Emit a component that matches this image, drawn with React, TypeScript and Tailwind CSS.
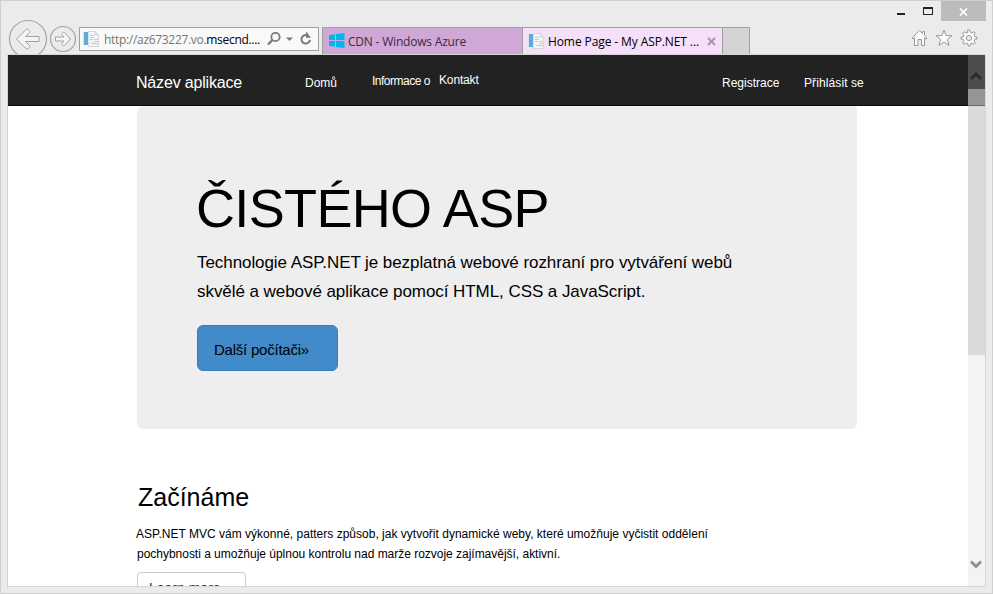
import type { ReactNode } from "react";

const chromeFont = "font-['Open_Sans','Noto_Sans',sans-serif]";

function PageIcon() {
  return (
    <svg width="16" height="16" viewBox="0 0 16 16" className="shrink-0">
      <path d="M5.500 .5h7l3 3v12h-10z" fill="#f3f5f7" stroke="#d3d7db" />
      <path d="M12 .5v3.500h3.500" fill="#e4e8ec" stroke="#d3d7db" />
      <path d="M7 4.500h4M7 6.500h4M7 8.500h3M11 8.500h4M11 10.500h4M8 12.500h7" stroke="#c2cad3" />
      <rect x="1" y="1" width="4" height="13" fill="#64a9d8" />
      <path d="M.5 .5v14M5.500 .5v14" stroke="#d5e5ef" />
    </svg>
  );
}

function BackIcon() {
  return (
    <svg width="40" height="40" viewBox="0 0 40 40" className="mt-[18px] shrink-0" fill="#f5f5f5" stroke="#a3a3a3">
      <circle cx="20" cy="20" r="18.500" fill="#ebebeb" strokeWidth="1.200" />
      <path d="M8.500 20 18 10.500q1-1 2.200 0l1.300 1.300q.8.9 0 1.800L17.500 17.500H31v5H17.500l4 4q.8.900 0 1.800l-1.300 1.300q-1.200 1-2.200 0z" />
    </svg>
  );
}

function ForwardIcon() {
  return (
    <svg width="28" height="28" viewBox="0 0 28 28" className="mt-6 shrink-0" fill="#f5f5f5" stroke="#a3a3a3">
      <circle cx="14" cy="14" r="12.500" fill="#ebebeb" strokeWidth="1.200" />
      <path d="m21.500 14-6 6.500q-.7.600-1.300 0l-1.200-1.200q-.5-.6 0-1.200l2-2.100H6.500v-4H15l-2-2.100q-.5-.6 0-1.200l1.200-1.200q.6-.6 1.300 0z" />
    </svg>
  );
}

function AddressBar() {
  return (
    <div className="mt-[26px] ml-0.5 flex h-6 w-60 shrink-0 items-center border border-[#a0a0a0] bg-[#f9f9f9] pl-[3px]">
      <PageIcon />
      <span className={`ml-[5px] w-[157px] pt-0.5 text-[12px] leading-[22px] tracking-[-0.310px] whitespace-nowrap text-[#777] ${chromeFont}`}>
        http://az673227.vo.<span className="text-black">msecnd....</span>
      </span>
      <svg width="52" height="16" viewBox="0 0 52 16" className="ml-[7px] shrink-0" fill="none" stroke="#7a7a7a">
        <circle cx="8.500" cy="6" r="4.200" strokeWidth="1.800" />
        <path d="M5.500 9 1 13.500" strokeWidth="2.400" />
        <path d="M19 6.500h7L22.500 10z" fill="#7a7a7a" stroke="none" />
        <path d="M40 4.200A4.300 4.300 0 1 0 43 8.800" strokeWidth="2" />
        <path d="M39 .2v6.600h5z" fill="#7a7a7a" stroke="none" />
      </svg>
    </div>
  );
}

function Tabs() {
  return (
    <div className={`mt-[26px] ml-[3px] flex h-[27px] shrink-0 border-t border-l border-[#a0a0a0] text-[12px] ${chromeFont}`}>
      <div className="flex w-[199px] bg-[#d0a8d7] pl-1.5 text-[#3d2b40]">
        <svg width="16" height="15" viewBox="0 0 16 15" className="mt-[5px] shrink-0" fill="#00b6f1">
          <path d="M0 2.200 6 1.300V7H0zM7 1.100 15.500 0v7H7zM0 8h6v5.700l-6-.9zM7 8h8.500v7L7 13.900z" />
        </svg>
        <span className="ml-[3px] leading-[28px] tracking-[-0.200px] whitespace-nowrap">CDN - Windows Azure</span>
      </div>
      <div className="flex w-[201px] border-x border-[#a0a0a0] bg-[#f6dff9] pl-[5px] text-black">
        <div className="mt-[5px]"><PageIcon /></div>
        <span className="ml-1 w-[156px] leading-[28px] tracking-[-0.100px] whitespace-nowrap">Home Page - My ASP.NET ...</span>
        <svg width="10" height="10" viewBox="0 0 10 10" className="mt-[9px] ml-[3px] shrink-0" stroke="#a894ab" strokeWidth="2">
          <path d="m1 1 7 7M8 1 1 8" />
        </svg>
      </div>
      <div className="w-[27px] border-r border-[#a0a0a0] bg-[#d4d4d4]" />
    </div>
  );
}

function WindowControls() {
  return (
    <div className="mr-[6px] ml-auto flex w-[89px] shrink-0 flex-col">
      <div className="flex h-5">
        <div className="mt-3 h-0.5 w-2 bg-[#222]" />
        <div className="mt-[6px] ml-[18px] h-[8px] w-[10px] border border-t-2 border-[#222]" />
        <div className="ml-auto flex h-5 w-[45px] items-center justify-center bg-[#bcbcbc] pt-0.5">
          <svg width="9" height="8" viewBox="0 0 9 8" stroke="white" strokeWidth="1.700">
            <path d="m1 .5 7 7M8 .5l-7 7" />
          </svg>
        </div>
      </div>
      <div className="mt-[8px] ml-[14px] flex gap-[7px]">
        <svg width="18" height="18" viewBox="0 0 18 18" fill="#fdfdfd" stroke="#999">
          <path d="m1.200 9 7.300-7.500L11.500 4.500v-2h2v4L16 9l-1 1-1.500-1v7.500H10.500V10.500H7v6H3.500V9L2 10z" />
        </svg>
        <svg width="18" height="18" viewBox="0 0 18 18" className="-ml-px" fill="#fdfdfd" stroke="#999">
          <path d="m9 1 2.100 5.500 5.900.3-4.600 3.700 1.600 5.900-5-3.300-5 3.300 1.600-5.900L1 6.800l5.900-.3z" />
        </svg>
        <svg width="18" height="18" viewBox="0 0 18 18" fill="#fdfdfd" stroke="#999">
          <path d="m7.500 1 .4 2.300L6 4.100 4 2.600 2.600 4 4 6l-.8 1.900L1 8v2l2.200.3L4 12l-1.400 2L4 15.400 6 14l1.900.8.3 2.200h2l.2-2.200L12 14l2 1.400 1.400-1.400-1.400-2 .8-1.700L17 10V8l-2.200-.2L14 6l1.400-2L14 2.600 12 4l-1.700-.8L10 1z" />
          <circle cx="9" cy="9" r="2.600" fill="#ebebeb" />
        </svg>
      </div>
    </div>
  );
}

function NavLink({ className, children }: { className: string; children: ReactNode }) {
  return (
    <a className={`block shrink-0 text-[12px] leading-[14px] whitespace-nowrap text-white ${className}`}>{children}</a>
  );
}

function Navbar() {
  return (
    <nav className="flex h-[51px] shrink-0 border-b border-[#080808] bg-[#222] pl-32">
      <a className="mt-[19px] w-[169px] text-[16px] leading-[18px] tracking-[-0.180px] whitespace-nowrap text-white">Název aplikace</a>
      <NavLink className="mt-[21px] w-[67px]">Domů</NavLink>
      <NavLink className="mt-[19px] w-[67px] tracking-[-0.500px]">Informace o</NavLink>
      <NavLink className="mt-[18px] w-[283px] tracking-[-0.150px]">Kontakt</NavLink>
      <NavLink className="mt-[21px] w-[82px]">Registrace</NavLink>
      <NavLink className="mt-[21px] tracking-[0.100px]">Přihlásit se</NavLink>
    </nav>
  );
}

function Scrollbar() {
  return (
    <div className="flex w-[17px] shrink-0 flex-col bg-[#f3f3f3]">
      <div className="h-[34px] shrink-0 bg-[#4d4d4d] pt-[17px] pl-0.5">
        <svg width="12" height="9" viewBox="0 0 12 9" fill="none" stroke="#2b2b2b" strokeWidth="2.600">
          <path d="m1 7 5-5 5 5" />
        </svg>
      </div>
      <div className="h-[16px] shrink-0 bg-[#969696]" />
      <div className="h-px shrink-0 bg-[#666]" />
      <div className="h-[249px] shrink-0 bg-[#dadada]" />
      <svg width="12" height="10" viewBox="0 0 12 10" className="mt-auto mb-[16px] ml-[2px] shrink-0" fill="none" stroke="#8b8b8b" strokeWidth="2.700">
        <path d="m1 1.500 5 5 5-5" />
      </svg>
    </div>
  );
}

export default function App() {
  return (
    <div className="flex h-[594px] w-[993px] flex-col overflow-hidden border border-[#cfcfcf] bg-[#ebebeb]">
      <header className="flex h-[53px] shrink-0 overflow-hidden pl-[7px]">
        <BackIcon />
        <div className="ml-px flex"><ForwardIcon /></div>
        <AddressBar />
        <Tabs />
        <WindowControls />
      </header>
      <div className="mx-[6px] flex h-[533px] shrink-0 overflow-hidden border border-[#d5d5d5] bg-white font-['Liberation_Sans',Arial,sans-serif] text-black">
        <div className="flex min-w-0 flex-1 flex-col overflow-hidden">
          <Navbar />
          <main className="ml-[129px] w-[720px]">
            <section className="h-[323px] rounded-[6px] rounded-tr-sm bg-[#eee] px-[60px] pt-[71px]">
              <h1 className="-ml-px text-[54px] leading-[62px] tracking-[-0.650px] whitespace-nowrap">ČISTÉHO ASP</h1>
              <p className="mt-[9px] text-[17px] leading-[29px] whitespace-nowrap">
                <span className="block tracking-[-0.070px]">Technologie ASP.NET je bezplatná webové rozhraní pro vytváření webů</span>
                <span className="block tracking-[-0.060px]">skvělé a webové aplikace pomocí HTML, CSS a JavaScript.</span>
              </p>
              <a className="mt-[19px] flex h-[46px] w-[141px] items-center rounded-[6px] border border-[#357ebd] bg-[#428bca] pt-1 pl-4 text-[15px] tracking-[-0.230px] whitespace-nowrap">Další počítači»</a>
            </section>
            <section className="pt-[54px]">
              <h2 className="ml-px text-[25px] leading-7 whitespace-nowrap">Začínáme</h2>
              <p className="mt-[13px] text-[12px] leading-5 whitespace-nowrap">
                <span className="-ml-px block tracking-[0.010px]">ASP.NET MVC vám výkonné, patters způsob, jak vytvořit dynamické weby, které umožňuje vyčistit oddělení</span>
                <span className="block tracking-[-0.020px]">pochybnosti a umožňuje úplnou kontrolu nad marže rozvoje zajímavější, aktivní.</span>
              </p>
              <a className="mt-[8px] block h-[34px] w-[109px] rounded-[4px] border border-[#ccc] pt-[5px] pl-[11px] text-[14px] leading-5 whitespace-nowrap text-[#333]">Learn more</a>
            </section>
          </main>
        </div>
        <Scrollbar />
      </div>
    </div>
  );
}
